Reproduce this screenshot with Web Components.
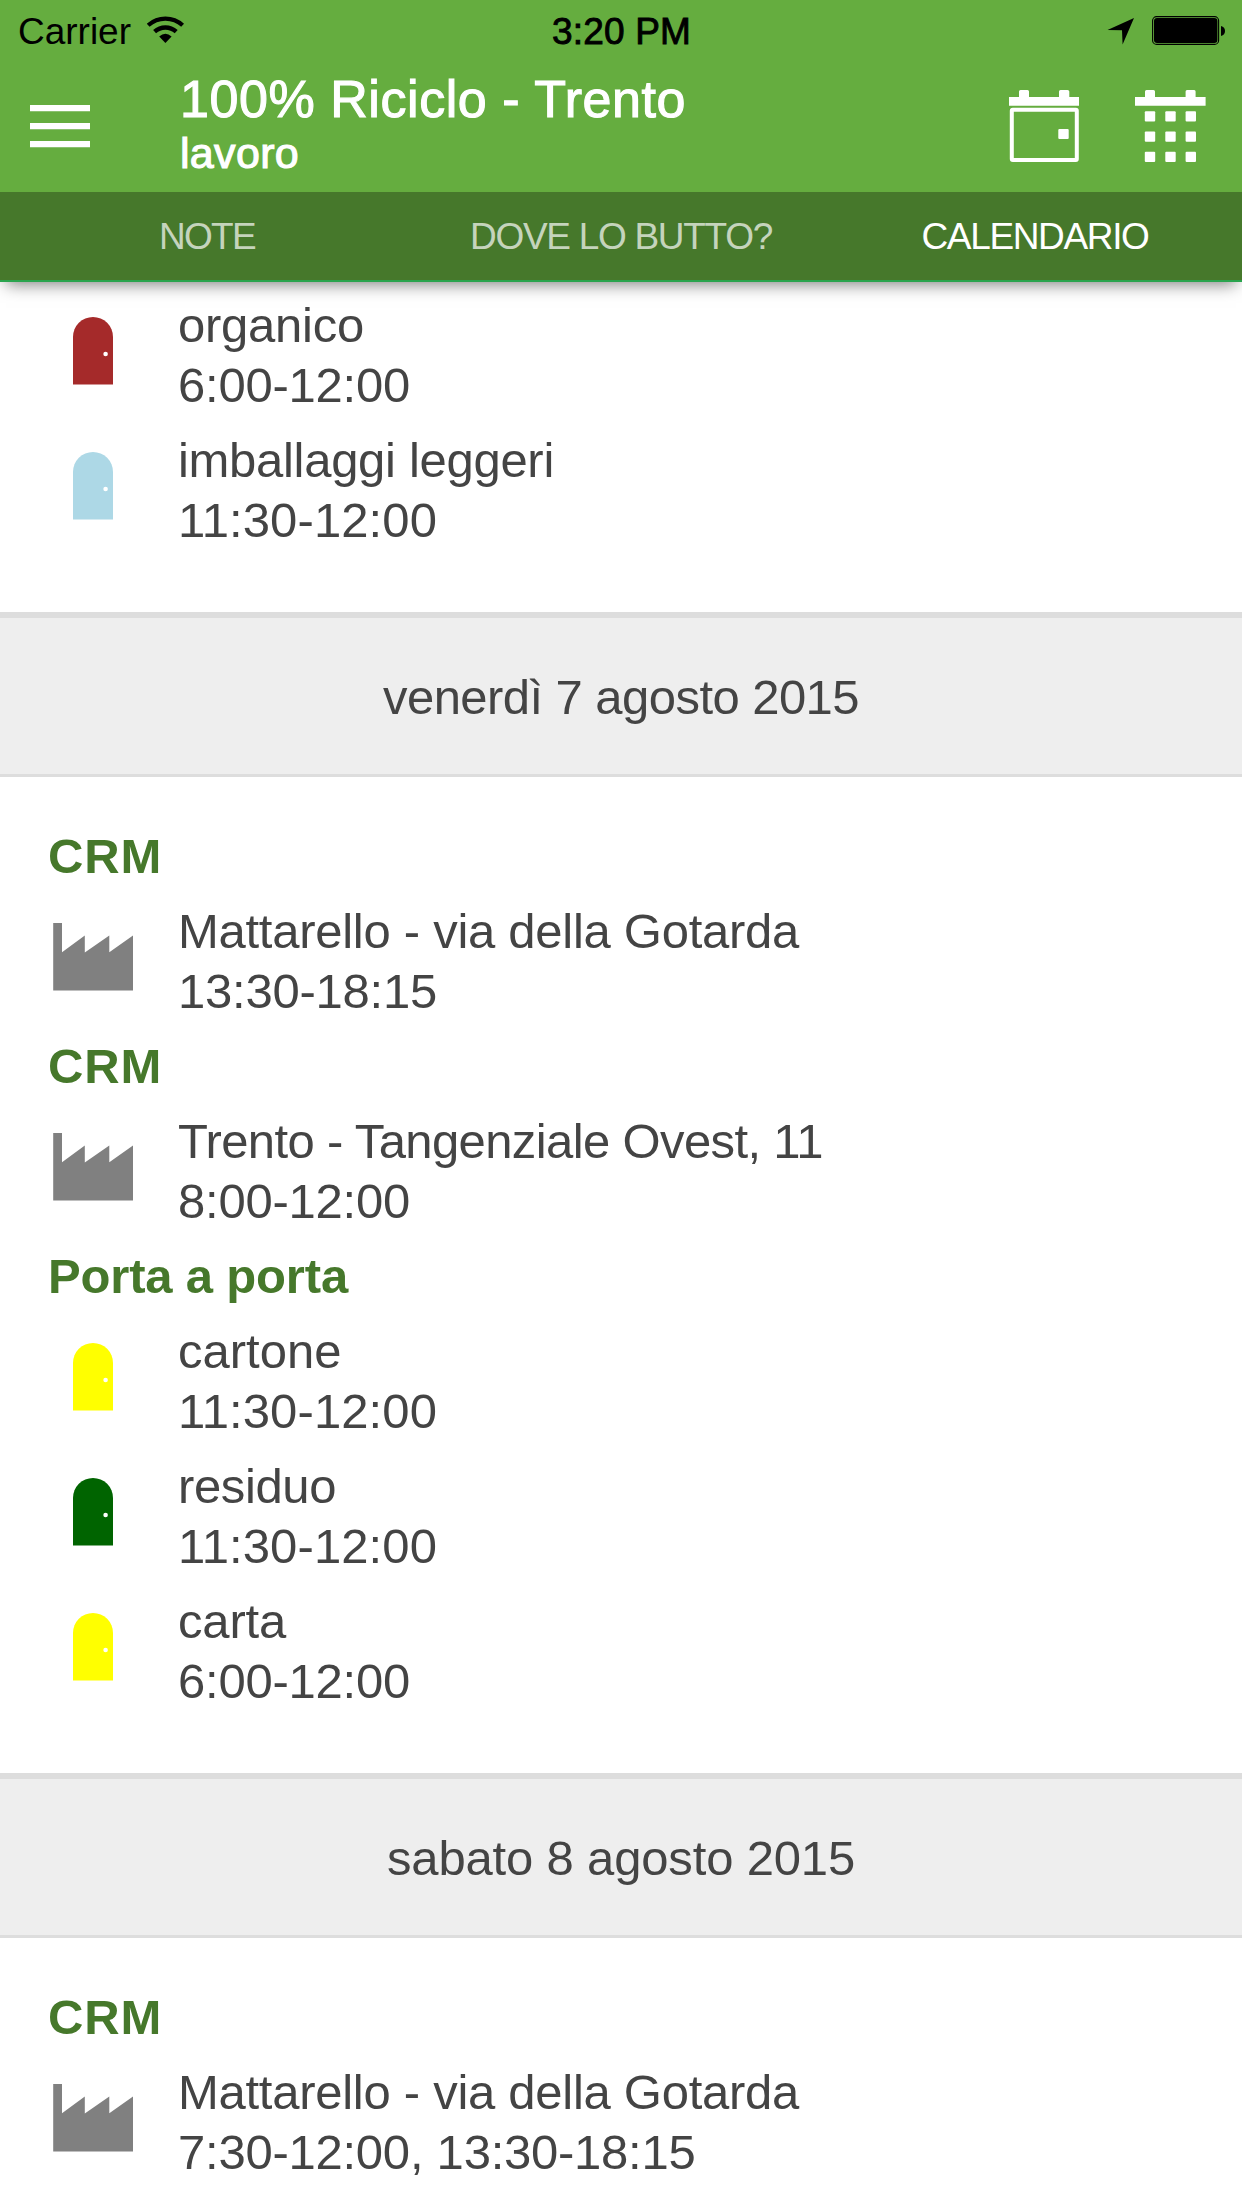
<!DOCTYPE html>
<html lang="it">
<head>
<meta charset="utf-8">
<title>100% Riciclo - Trento</title>
<style>
  html, body { margin: 0; height: 2208px; overflow: hidden; background: #fff; }
  body { font-family: "Liberation Sans", Arial, sans-serif; color: #444; }
</style>
</head>
<body>
<riciclo-app>
  <status-bar slot="top"></status-bar>
  <app-toolbar slot="top">
    <fit-text slot="title" size="506">100% Riciclo - Trento</fit-text>
    <fit-text slot="subtitle" size="119">lavoro</fit-text>
  </app-toolbar>
  <tab-bar slot="top">
    <tab-item><fit-text size="96">NOTE</fit-text></tab-item>
    <tab-item><fit-text size="302">DOVE LO BUTTO?</fit-text></tab-item>
    <tab-item active><fit-text size="227">CALENDARIO</fit-text></tab-item>
  </tab-bar>

  <day-events first>
    <pickup-row icon="door" color="#a52a2a"><fit-text size="186">organico</fit-text><fit-text slot="time" size="232">6:00-12:00</fit-text></pickup-row>
    <pickup-row icon="door" color="#add8e6"><fit-text size="376">imballaggi leggeri</fit-text><fit-text slot="time" size="259">11:30-12:00</fit-text></pickup-row>
  </day-events>

  <day-divider><fit-text size="476">venerdì 7 agosto 2015</fit-text></day-divider>
  <day-events>
    <group-title><fit-text size="114">CRM</fit-text></group-title>
    <pickup-row icon="factory" color="#808080"><fit-text size="621">Mattarello - via della Gotarda</fit-text><fit-text slot="time" size="259">13:30-18:15</fit-text></pickup-row>
    <group-title><fit-text size="114">CRM</fit-text></group-title>
    <pickup-row icon="factory" color="#808080"><fit-text size="645">Trento - Tangenziale Ovest, 11</fit-text><fit-text slot="time" size="232">8:00-12:00</fit-text></pickup-row>
    <group-title><fit-text size="300">Porta a porta</fit-text></group-title>
    <pickup-row icon="door" color="#ffff00"><fit-text size="163.5">cartone</fit-text><fit-text slot="time" size="259">11:30-12:00</fit-text></pickup-row>
    <pickup-row icon="door" color="#006400"><fit-text size="158">residuo</fit-text><fit-text slot="time" size="259">11:30-12:00</fit-text></pickup-row>
    <pickup-row icon="door" color="#ffff00"><fit-text size="108">carta</fit-text><fit-text slot="time" size="232">6:00-12:00</fit-text></pickup-row>
  </day-events>

  <day-divider><fit-text size="468">sabato 8 agosto 2015</fit-text></day-divider>
  <day-events>
    <group-title><fit-text size="114">CRM</fit-text></group-title>
    <pickup-row icon="factory" color="#808080"><fit-text size="621">Mattarello - via della Gotarda</fit-text><fit-text slot="time" size="517.5">7:30-12:00, 13:30-18:15</fit-text></pickup-row>
  </day-events>
</riciclo-app>

<script>
const define = (name, html, setup) => customElements.define(name, class extends HTMLElement {
  constructor() {
    super();
    this.attachShadow({ mode: 'open' }).innerHTML = html;
  }
  connectedCallback() { if (setup) setup(this); }
});

define('riciclo-app', `
  <style>
    :host { display: flex; flex-direction: column; width: 1242px; height: 2208px; overflow: hidden; background: #fff; }
    header { flex: none; display: flex; flex-direction: column; position: relative; z-index: 1;
      background: #65ad3f; border-bottom: 2px solid #2aa44e; box-shadow: 0 8px 16px -6px rgba(0,0,0,.52); }
    main { display: flex; flex-direction: column; flex: none; }
  </style>
  <header><slot name="top"></slot></header>
  <main><slot></slot></main>`);

define('status-bar', `
  <style>
    :host { display: grid; grid-template-columns: 1fr auto 1fr; height: 60px; box-sizing: border-box;
      padding: 9px 17px 0 18px; color: #000; font-size: 37px; line-height: 45px; }
    .left { display: flex; align-items: flex-start; gap: 16px; }
    .time { -webkit-text-stroke: .9px #000; }
    .right { display: flex; justify-content: flex-end; align-items: flex-start; gap: 18px; }
    svg { display: block; margin-top: 7px; }
  </style>
  <div class="left">
    <fit-text size="113">Carrier</fit-text>
    <svg width="38" height="28" viewBox="147 16 38 28" fill="none" stroke="#000">
      <path d="M148.2 25.2A25.5 25.5 0 0 1 182.6 25.2" stroke-width="4.2"/>
      <path d="M154.6 31.6A16.2 16.2 0 0 1 176.2 31.6" stroke-width="4.4"/>
      <path d="M159.2 36.6Q165.4 31 171.6 36.6L165.4 43Z" fill="#000" stroke="none"/>
    </svg>
  </div>
  <fit-text class="time" size="139">3:20 PM</fit-text>
  <div class="right">
    <svg width="27" height="29" viewBox="1107 16 27 29"><path d="M1134 18L1107.5 30L1122 30.2L1122.6 44.6Z"/></svg>
    <svg width="73" height="29" viewBox="1152 16 73 29">
      <rect x="1152.6" y="16.6" width="66" height="27.8" rx="4" fill="none" stroke="#000" stroke-width="1.1"/>
      <rect x="1154" y="18" width="63.4" height="25" rx="3"/>
      <path d="M1221 26Q1225 27 1225 31Q1225 35 1221 36Z"/>
    </svg>
  </div>`);

define('app-toolbar', `
  <style>
    :host { display: flex; height: 132px; color: #fff; padding: 0 36px 0 30px; box-sizing: border-box; }
    svg { display: block; flex: none; }
    .menu { margin-top: 45px; }
    .titles { display: flex; flex-direction: column; flex: 1; padding: 9px 0 0 90px; align-items: flex-start; }
    .title { font-size: 52px; line-height: 60px; -webkit-text-stroke: 1.1px #fff; }
    .sub { font-size: 43px; line-height: 48px; -webkit-text-stroke: 1.1px #fff; }
    .actions { display: flex; gap: 56px; margin-top: 30px; }
  </style>
  <svg class="menu" width="60" height="43" fill="#fff"><path d="M0 0h60v6.2H0zM0 18h60v6.2H0zM0 36h60v6.2H0z"/></svg>
  <div class="titles">
    <div class="title"><slot name="title"></slot></div>
    <div class="sub"><slot name="subtitle"></slot></div>
  </div>
  <div class="actions">
    <svg width="70" height="72" viewBox="0 0 70 72" fill="#fff">
      <path d="M0 7H10V1.5Q10 0 11.5 0H18.5Q20 0 20 1.5V7H50V1.5Q50 0 51.5 0H58.5Q60.3 0 60.3 1.5V7H70V15.8H0Z"/>
      <rect x="2.8" y="19.7" width="65" height="50.3" rx="1" fill="none" stroke="#fff" stroke-width="4"/>
      <rect x="49.3" y="39" width="10.4" height="10" rx="1"/>
    </svg>
    <svg width="71" height="72" viewBox="0 0 71 72" fill="#fff">
      <path d="M0 7H10V1.5Q10 0 11.5 0H18.5Q20 0 20 1.5V7H50.6V1.5Q50.6 0 52 0H59.2Q60.6 0 60.6 1.5V7H70.6V15.8H0Z"/>
      <g id="cells"></g>
    </svg>
  </div>`, el => {
    el.shadowRoot.querySelector('#cells').innerHTML = [21.3, 41.5, 61.7].map(y =>
      [9.8, 30.3, 50.6].map(x => `<rect x="${x}" y="${y}" width="10.4" height="10.3" rx="1"/>`).join('')).join('');
  });

define('tab-bar', `
  <style>:host { display: grid; grid-template-columns: repeat(3, 1fr); height: 88px; background: #46782b; }</style>
  <slot></slot>`);

define('tab-item', `
  <style>
    :host { display: flex; justify-content: center; font-size: 37px; line-height: 89px; height: 88px; color: rgba(255,255,255,.7); }
    :host([active]) { color: #fff; }
  </style>
  <slot></slot>`);

define('day-events', `
  <style>
    :host { display: flex; flex-direction: column; padding: 49px 0 47px; }
    :host([first]) { padding-top: 13px; }
  </style>
  <slot></slot>`);

define('day-divider', `
  <style>
    :host { display: flex; justify-content: center; box-sizing: border-box; height: 165px; padding-top: 49px;
      background: #eee; border-top: 6px solid #ddd; border-bottom: 3px solid #ddd; font-size: 49px; line-height: 60px; }
  </style>
  <slot></slot>`);

define('group-title', `
  <style>
    :host { display: flex; height: 60px; padding: 0 48px 15px; font-size: 49px; line-height: 60px; font-weight: 700; color: #46782b; }
  </style>
  <slot></slot>`);

const ICONS = {
  door: '<path d="M20 20a20 20 0 0 1 40 0v47.5h-40z"/><ellipse cx="52.6" cy="37" rx="2.3" ry="2.3" fill="#fff"/>',
  factory: '<path d="M.2 0H9V29.3L31.8 12.6V29.5L56.3 12.6V29.3L80 12.4V67.4H.2z"/>'
};

define('pickup-row', `
  <style>
    :host { display: flex; gap: 45px; height: 120px; padding: 0 53px 15px; }
    svg { display: block; flex: none; margin-top: 22px; }
    .text { display: flex; flex-direction: column; align-items: flex-start; font-size: 49px; line-height: 60px; }
  </style>
  <svg width="80" height="68" viewBox="0 0 80 68"></svg>
  <div class="text"><slot></slot><slot name="time"></slot></div>`, el => {
    const svg = el.shadowRoot.querySelector('svg');
    svg.setAttribute('fill', el.getAttribute('color'));
    svg.innerHTML = ICONS[el.getAttribute('icon')];
  });

// A single-line label whose tracking is adjusted so that it spans "size" pixels.
define('fit-text', `
  <style>:host { display: inline-block; white-space: nowrap; flex: none; }</style><slot></slot>`, el => {
    const natural = el.getBoundingClientRect().width;
    const spacing = (el.getAttribute('size') - natural) / el.textContent.length;
    el.style.letterSpacing = spacing.toFixed(3) + 'px';
  });
</script>
</body>
</html>
